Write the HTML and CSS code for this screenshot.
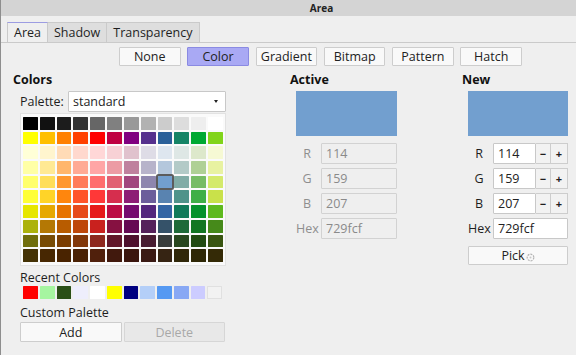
FILE: index.html
```html
<!DOCTYPE html>
<html lang="en">
<head>
  <meta charset="UTF-8" />
  <title>Area</title>
  <link rel="stylesheet" href="styles.css">
</head>
<body>

  <div class="window">
    <div class="titlebar">Area</div>

    <div class="tabs">
      <div class="tab active">Area</div>
      <div class="tab">Shadow</div>
      <div class="tab">Transparency</div>
    </div>

    <div class="panel">
      <div class="modes">
        <button class="mode">None</button>
        <button class="mode selected">Color</button>
        <button class="mode">Gradient</button>
        <button class="mode">Bitmap</button>
        <button class="mode">Pattern</button>
        <button class="mode">Hatch</button>
      </div>

      <div class="content">
        <div class="col-colors">
          <div class="heading">Colors</div>
          <div class="palette-row">
            <span class="label">Palette:</span>
            <div class="select">standard<span class="arrow"></span></div>
          </div>
          <div class="grid-box">
            <div class="grid" id="grid"></div>
          </div>
          <div class="sub">Recent Colors</div>
          <div class="recent" id="recent"></div>
          <div class="sub sub-custom">Custom Palette</div>
          <div class="custom-actions">
            <button class="btn">Add</button>
            <button class="btn" disabled>Delete</button>
          </div>
        </div>

        <div class="col-active">
          <div class="heading">Active</div>
          <div class="swatch"></div>
          <div class="fields">
            <div class="field"><span class="flabel">R</span><input class="inp wide" value="114" disabled></div>
            <div class="field"><span class="flabel">G</span><input class="inp wide" value="159" disabled></div>
            <div class="field"><span class="flabel">B</span><input class="inp wide" value="207" disabled></div>
            <div class="field"><span class="flabel">Hex</span><input class="inp wide" value="729fcf" disabled></div>
          </div>
        </div>

        <div class="col-new">
          <div class="heading">New</div>
          <div class="swatch"></div>
          <div class="fields">
            <div class="field"><span class="flabel">R</span><input class="inp num" value="114"><span class="spin">−</span><span class="spin plus">+</span></div>
            <div class="field"><span class="flabel">G</span><input class="inp num" value="159"><span class="spin">−</span><span class="spin plus">+</span></div>
            <div class="field"><span class="flabel">B</span><input class="inp num" value="207"><span class="spin">−</span><span class="spin plus">+</span></div>
            <div class="field"><span class="flabel">Hex</span><input class="inp hex" value="729fcf"></div>
          </div>
          <button class="btn pick">Pick<svg class="pick-icon" width="9" height="9" viewBox="0 0 9 9"><circle cx="4.5" cy="4.5" r="3.3" fill="none" stroke="#b4b4b4" stroke-width="1.2" stroke-dasharray="2 1"/><circle cx="4.5" cy="4.5" r="1" fill="#c8c8c8"/></svg></button>
        </div>
      </div>
    </div>
  </div>

  <script>
    const palette = [
      "000000","111111","1c1c1c","333333","666666","808080","999999","b2b2b2","cccccc","dddddd","eeeeee","ffffff",
      "ffff00","ffbf00","ff8000","ff4000","ff0000","bf0041","800080","55308d","2a6099","158466","00a933","81d41a",
      "ffffd7","fff5ce","ffdbb6","ffd8ce","ffd7d7","f7d1d5","e0c2cd","dedce6","dee6ef","dee7e5","dde8cb","f6f9d4",
      "ffffa6","ffe994","ffb66c","ffaa95","ffa6a6","ec9ba4","bf819e","b7b3ca","b4c7dc","b3cac7","afd095","e8f2a1",
      "ffff6d","ffde59","ff972f","ff7b59","ff6d6d","e16173","a1467e","8e86ae","729fcf","81aca6","77bc65","d4ea6b",
      "ffff38","ffd428","ff860d","ff5429","ff3838","d62e4e","8d1d75","6b5e9b","5983b0","50938a","3faf46","c9e14a",
      "e6e600","e6a800","e67300","e64a19","e61919","bb0d44","750b6e","53277d","3465a4","127a5a","06922b","5eb91e",
      "acb20c","b47804","b85c00","be480a","c9211e","861141","650953","55215b","355269","1e6a39","127622","468a1a",
      "706e0c","784b04","7b3d00","813709","8d281e","611729","4e102d","481d32","383d3c","28471f","224b12","395511",
      "443205","472702","492300","4b2204","50200c","41190d","3b160e","3a1a14","362413","302709","2e2706","342a06"
    ];
    const recent = ["ff0000","a6f5a0","2a4f16","eeeefc","ffffff","ffff00","000080","b4cff8","5599f2","88a8f4","ccccff","f2f2f2"];

    const grid = document.getElementById("grid");
    palette.forEach(c => {
      const cell = document.createElement("div");
      cell.className = "cell" + (c === "729fcf" ? " current" : "");
      cell.style.background = "#" + c;
      grid.appendChild(cell);
    });

    const rec = document.getElementById("recent");
    recent.forEach(c => {
      const cell = document.createElement("div");
      cell.className = "cell";
      cell.style.background = "#" + c;
      rec.appendChild(cell);
    });
  </script>

</body>
</html>
```

FILE: styles.css
```css
* {
  box-sizing: border-box;
  font-family: 'Open Sans', 'Noto Sans', sans-serif;
}

body {
  margin: 0;
  background-color: #efefef;
  color: #1e1e1e;
  font-size: 12.5px;
}

.window {
  width: 576px;
  height: 355px;
  border-left: 1px solid #8e8e8e;
  overflow: hidden;
}

.titlebar {
  height: 16px;
  line-height: 16px;
  background-color: #d4d4d4;
  font-size: 10px;
  font-weight: bold;
  text-align: center;
  padding-left: 66px;
  color: #222;
}

.tabs {
  display: flex;
  margin-top: 6px;
  padding-left: 6px;
  height: 20px;
}

.tab {
  height: 20px;
  line-height: 19px;
  padding: 0 6px;
  background-color: #dedede;
  border: 1px solid #cacaca;
  border-bottom: none;
  border-left: none;
}

.tab.active {
  background-color: #efefef;
  border-left: 1px solid #cacaca;
  border-top: 1px solid #9c9ce2;
}

.panel {
  border-top: 1px solid #cacaca;
}

.modes {
  display: flex;
  gap: 6.8px;
  margin-top: 4px;
  padding-left: 118px;
}

.mode {
  width: 61.5px;
  height: 19px;
  padding: 0;
  font-size: 12.5px;
  color: #222;
  background-color: #f9f9f9;
  border: 1px solid #cdcdcd;
  border-radius: 1px;
}

.mode.selected {
  background-color: #a9a9f4;
  border-color: #8a8ae2;
}

.content {
  display: flex;
  padding-top: 5px;
}

.heading {
  font-weight: bold;
  line-height: 17px;
  color: #111;
}

/* colonne gauche */
.col-colors {
  width: 289px;
  padding-left: 12px;
}

.palette-row {
  display: flex;
  align-items: center;
  margin: 3px 0 0 7px;
  width: 206px;
}

.palette-row .label {
  width: 48px;
}

.select {
  flex: 1;
  height: 21px;
  line-height: 19px;
  padding-left: 4px;
  background-color: #fff;
  border: 1px solid #c8c8c8;
  border-radius: 1px;
  position: relative;
}

.arrow {
  position: absolute;
  right: 7px;
  top: 8px;
  border-left: 2.5px solid transparent;
  border-right: 2.5px solid transparent;
  border-top: 3px solid #222;
}

.grid-box {
  margin: 1px 0 0 7px;
  width: 206px;
  padding: 3px 2px;
  background-color: #fafafa;
  border: 1px solid #e2e2e2;
}

.grid {
  display: grid;
  grid-template-columns: repeat(12, 1fr);
  grid-template-rows: repeat(10, 1fr);
  gap: 2px;
  height: 145px;
}

.cell {
  border-radius: 0.5px;
}

.cell.current {
  outline: 2px solid #5c5c5c;
  outline-offset: 0;
}

.sub {
  margin: 3px 0 0 7px;
  line-height: 17px;
}

.sub-custom {
  margin-top: 5px;
}

.recent {
  display: grid;
  grid-template-columns: repeat(12, 1fr);
  gap: 2px;
  width: 199px;
  height: 13px;
  margin: 0 0 0 10px;
}

.recent .cell:last-child {
  border: 1px solid #e0e0e0;
}

.custom-actions {
  display: grid;
  grid-template-columns: 1fr 1fr;
  gap: 2px;
  width: 205px;
  margin: 1px 0 0 7px;
}

.btn {
  height: 20px;
  padding: 0;
  font-size: 12.5px;
  color: #222;
  background-color: #f9f9f9;
  border: 1px solid #cdcdcd;
  border-radius: 1px;
}

.btn:disabled {
  background-color: #e8e8e8;
  color: #a8a8a8;
  border-color: #d6d6d6;
}

/* colonnes Active / New */
.col-active {
  width: 172px;
}

.col-new {
  flex: 1;
}

.swatch {
  width: 101px;
  height: 45px;
  margin: 3px 0 0 6px;
  background-color: #729fcf;
}

.col-new .swatch {
  width: 100px;
}

.fields {
  display: flex;
  flex-direction: column;
  gap: 4px;
  margin: 7px 0 0 6px;
}

.field {
  display: flex;
  align-items: center;
  height: 21px;
}

.flabel {
  width: 22px;
  margin-right: 3px;
  text-align: center;
  line-height: 21px;
  white-space: nowrap;
}

.col-active .flabel {
  color: #8e8e8e;
}

.inp {
  height: 21px;
  padding: 0 0 0 4px;
  font-size: 12.5px;
  color: #222;
  background-color: #fff;
  border: 1px solid #c8c8c8;
  border-radius: 1px;
}

.inp:disabled {
  background-color: #efefef;
  color: #8a8a8a;
  border-color: #d2d2d2;
}

.inp.wide {
  width: 76px;
}

.inp.num {
  width: 43px;
}

.inp.hex {
  width: 75px;
}

.spin {
  width: 15px;
  height: 21px;
  line-height: 20px;
  text-align: center;
  font-size: 11px;
  font-weight: bold;
  background-color: #f2f2f2;
  border: 1px solid #cdcdcd;
  border-left: none;
}

.spin.plus {
  width: 17px;
}

.pick {
  width: 100px;
  height: 19px;
  line-height: 17px;
  margin: 7px 0 0 6px;
  display: flex;
  align-items: center;
  justify-content: center;
}

.pick-icon {
  margin-left: 1px;
  margin-top: 3px;
}
```
